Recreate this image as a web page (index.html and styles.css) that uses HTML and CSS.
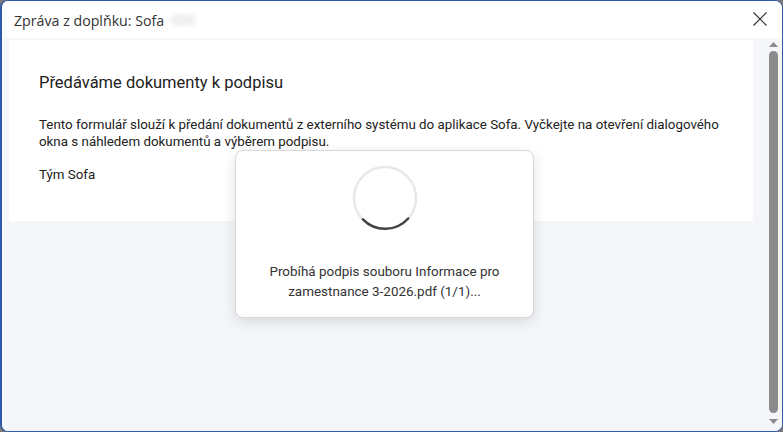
FILE: index.html
```html
<!DOCTYPE html>
<html lang="cs">
<head>
<meta charset="utf-8">
<link rel="stylesheet" href="styles.css">
</head>
<body>
<div class="window">
  <div class="titlebar">
    <span class="title">Zpráva z doplňku: Sofa</span>
    <span class="redact"></span>
    <svg class="close" width="16" height="16" viewBox="0 0 16 16"><path d="M1.5 1.5 L14.5 14.5 M14.5 1.5 L1.5 14.5" stroke="#333" stroke-width="1.2" fill="none"/></svg>
  </div>
  <div class="body">
    <div class="content">
      <div class="card">
        <h1 class="heading">Předáváme dokumenty k podpisu</h1>
        <p class="para">Tento formulář slouží k předání dokumentů z externího systému do aplikace Sofa. Vyčkejte na otevření dialogového okna s náhledem dokumentů a výběrem podpisu.</p>
        <p class="para">Tým Sofa</p>
      </div>
    </div>
    <div class="scrollbar">
      <svg class="arrow" width="9" height="5" viewBox="0 0 9 5"><path d="M0 5 L4.5 0 L9 5 Z" fill="#8a8a8a"/></svg>
      <div class="thumb"></div>
      <svg class="arrow" width="9" height="5" viewBox="0 0 9 5"><path d="M0 0 L4.5 5 L9 0 Z" fill="#8a8a8a"/></svg>
    </div>
  </div>
  <div class="modal">
    <svg class="spinner" width="66" height="66" viewBox="0 0 66 66">
      <circle cx="33" cy="33" r="31" fill="none" stroke="#e8e8e8" stroke-width="2.5"/>
      <path d="M10.9 54.3 A31 31 0 0 0 56.2 53.5" fill="none" stroke="#444" stroke-width="2.5" stroke-linecap="round"/>
    </svg>
    <p class="modal-text">Probíhá podpis souboru Informace pro<br>zamestnance 3-2026.pdf (1/1)...</p>
  </div>
</div>
</body>
</html>
```

FILE: styles.css
```css
* { box-sizing: border-box; }
html, body { margin: 0; padding: 0; }
body {
  width: 783px;
  height: 432px;
  background: #7a7a7a;
  font-family: Roboto, "Noto Sans", sans-serif;
  overflow: hidden;
}
.window {
  position: relative;
  width: 783px;
  height: 432px;
  background: #fff;
  border: 1px solid #2f5aa8;
  border-left-width: 2px;
  border-radius: 8px;
  overflow: hidden;
  display: flex;
  flex-direction: column;
}
.titlebar {
  height: 37px;
  flex: none;
  display: flex;
  align-items: center;
  padding-left: 12px;
  padding-right: 14px;
  background: #fff;
}
.title {
  font-family: "Open Sans", "Noto Sans", sans-serif;
  font-size: 14.2px;
  color: #333;
  padding-top: 1px;
}
.redact {
  width: 26px;
  height: 12px;
  margin-left: 6px;
  background: #f0f0f0;
  border-radius: 6px;
  filter: blur(2px);
}
.close { margin-left: auto; margin-top: -2px; }
.body {
  flex: 1;
  display: flex;
  background: #f5f6f9;
}
.content {
  flex: 1;
  padding: 2px 12px 0 7px;
}
.card {
  background: #fff;
  padding: 32px 30px 22px 30px;
  height: 181px;
}
.heading {
  margin: 0 0 22px 0;
  font-size: 16.5px;
  font-weight: 400;
  color: #222;
  line-height: 22px;
}
.para {
  margin: 0 0 16px 0;
  font-size: 13.35px;
  line-height: 17px;
  color: #222;
}
.scrollbar {
  width: 16px;
  flex: none;
  display: flex;
  flex-direction: column;
  align-items: center;
  padding: 4px 0 7px 0;
  margin-right: 1px;
}
.arrow { flex: none; }
.thumb {
  flex: 1;
  width: 9px;
  margin: 4px 0 6px 0;
  background: #8a8a8a;
  border-radius: 5px;
}
.modal {
  position: absolute;
  left: 233px;
  top: 149px;
  width: 299px;
  height: 168px;
  background: #fff;
  border: 1px solid #d8d8d8;
  border-radius: 8px;
  box-shadow: 0 4px 14px rgba(0,0,0,0.12);
  display: flex;
  flex-direction: column;
  align-items: center;
  padding-top: 14px;
}
.spinner { flex: none; }
.modal-text {
  margin: 31px 0 0 0;
  text-align: center;
  font-size: 13.45px;
  line-height: 20px;
  color: #333;
}
```
